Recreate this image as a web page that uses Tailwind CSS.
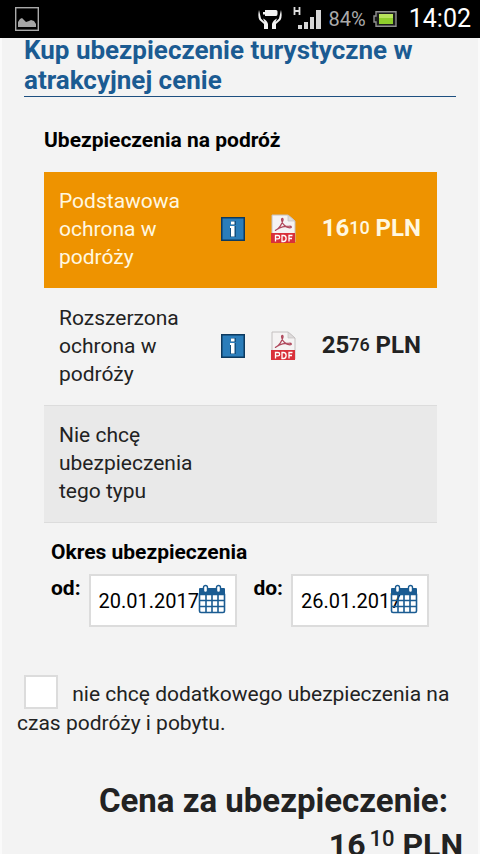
<!DOCTYPE html>
<html lang="pl">
<head>
<meta charset="utf-8">
<meta name="viewport" content="width=device-width, initial-scale=1">
<title>Ubezpieczenie turystyczne</title>
<script src="https://cdn.jsdelivr.net/npm/@tailwindcss/browser@4"></script>
</head>
<body class="h-screen overflow-hidden bg-[#fafafa] font-[Roboto,'Liberation_Sans',sans-serif] text-[21px] leading-[28px] text-[#222]">
<svg class="hidden" aria-hidden="true">
  <symbol id="info" viewBox="0 0 24 24">
    <rect width="24" height="24" fill="#0d3a5f"/><rect x="1.5" y="1.5" width="21" height="21" fill="#2b7dba"/>
    <path d="M10 4h5v4h-5zM9 9h6v11H9z" fill="#14507f"/>
    <path d="M10 4.500h3.500v3H10zM9 9h4.500v10.500H10V11H9z" fill="#fff"/>
  </symbol>
  <symbol id="pdf" viewBox="0 0 26 30">
    <path d="M2 1h16l7 6v21H2z" fill="#f5f3f3" stroke="#c4c0c0"/>
    <path d="M18 1v6h7z" fill="#dedbdb" stroke="#c4c0c0" stroke-width=".7"/>
    <path d="M6 16c3-1 6-6 7-10 .3-2-1.600-2-1.400 0 .4 4 4 7.500 8.400 7.800 2 0 1.600-1.700-.5-1.600-4 0-9.500 1.300-12.700 3.300-1.300.9-1.900 1.200-.8.500z" fill="none" stroke="#b0485c" stroke-width="1.300"/>
    <rect x="1" y="19" width="24" height="10" fill="#d9303a"/>
    <path d="M5.500 27.500v-6H8c2.200 0 2.200 3.300 0 3.300H5.500M12 21.500v6h1.500c3.500 0 3.500-6 0-6zM19 27.500v-6h3.500M19 24.500h3" fill="none" stroke="#fff" stroke-width="1.300"/>
  </symbol>
  <symbol id="calendar" viewBox="0 0 28 30">
    <path d="M1 5q0-1 1-1h24q1 0 1 1v6H1z" fill="#1b5c92"/>
    <path d="M1.500 10.500h25V27q0 1.500-1.500 1.500H3Q1.500 28.500 1.500 27zM2 16.500h24M2 22.500h24M8 11v17M14 11v17M20 11v17" fill="none" stroke="#1b5c92" stroke-width="1.600"/>
    <rect x="5.500" y="1.500" width="4" height="7" rx="2" fill="#fff" stroke="#1b5c92" stroke-width="1.400"/>
    <rect x="18.500" y="1.500" width="4" height="7" rx="2" fill="#fff" stroke="#1b5c92" stroke-width="1.400"/>
  </symbol>
</svg>

<header class="relative z-10 flex h-[38px] items-center bg-black pr-[9px] pl-[15px] text-white">
  <svg class="mr-auto h-6 w-6" viewBox="0 0 24 24" role="img" aria-label="Obraz"><rect x=".7" y=".7" width="22.600" height="22.600" fill="none" stroke="#aaa" stroke-width="1.400"/><path d="M3 20v-5l2-3 2-1 2 2 2 2 3-1 2-1 3 1 2 3v3z" fill="#a5a5a5"/></svg>
  <svg class="mr-[11px] h-5 w-6" viewBox="0 0 24 20" role="img" aria-label="Oszczędzanie energii"><path d="M1 1Q-.5 8 1.500 11L6 15v5h4v-5Q9 11 5 9.500L6.500 13 3 9.500zM23 1q1.500 7-.5 10L18 15v5h-4v-5q1-4 5-5.500L17.500 13 21 9.500z" fill="#f2f2f2"/><path d="M5 3h2V1h11q1.500 0 1.500 1.500V5Q19.500 7 18 7H7V5.500H5z" fill="#f2f2f2"/></svg>
  <svg class="mr-2 h-6 w-[28px]" viewBox="0 0 28 24" role="img" aria-label="Zasięg H"><path d="M1.500 0v8M6.500 0v8M1.500 4h5" stroke="#ddd" stroke-width="1.800" fill="none"/><path d="M5 18h4v4H5zM11 15h4v7h-4zM17 10h4v12h-4zM23 3h5v19h-5z" fill="#d5d5d5"/></svg>
  <span class="mr-[7px] text-[20px] text-[#aaa]">84%</span>
  <svg class="mr-[12px] h-4 w-6" viewBox="0 0 24 16" role="img" aria-label="Bateria"><path d="M3 .7h20v14.600H3V11H1V5h2z" fill="#1c1c1c" stroke="#909090" stroke-width="1.400"/><rect x="6" y="3" width="14" height="10" fill="#8fce2c"/><rect x="6" y="3" width="14" height="4" fill="#b8e35c"/></svg>
  <span class="text-[25px]">14:02</span>
</header>

<main class="mx-[2px] -mt-[3px] bg-[#f3f3f3] pb-8">
  <h1 class="mx-[22px] border-b border-[#1d4f80] pb-px text-[26px] leading-[30px] font-bold text-[#1b5b92]">Kup ubezpieczenie turystyczne w atrakcyjnej cenie</h1>

  <section class="mr-[41px] ml-[42px] pt-[29px]">
    <h2 class="font-bold text-black">Ubezpieczenia na podróż</h2>
    <table class="mt-[18px] w-full border-collapse">
      <tbody>
        <tr class="bg-[#ee9300] text-[#fff8e0]">
          <th scope="row" class="w-[165px] pt-[15px] pr-3 pb-[17px] pl-[15px] text-left font-normal">Podstawowa ochrona w podróży</th>
          <td class="w-12 pb-[2px]"><button type="button" class="mx-auto block" aria-label="Informacje"><svg class="size-6"><use href="#info"/></svg></button></td>
          <td class="w-[52px] pb-[2px]"><a href="#" class="block" aria-label="Warunki PDF"><svg class="mx-auto h-[30px] w-[26px]"><use href="#pdf"/></svg></a></td>
          <td class="pr-4 pb-1 text-right text-[24px] font-bold whitespace-nowrap">16<span class="align-[2px] text-[18px] leading-none font-medium">10</span> PLN</td>
        </tr>
        <tr>
          <th scope="row" class="pt-4 pr-3 pb-[17px] pl-[15px] text-left font-normal">Rozszerzona ochrona w podróży</th>
          <td class="pb-[2px]"><button type="button" class="mx-auto block" aria-label="Informacje"><svg class="size-6"><use href="#info"/></svg></button></td>
          <td class="pb-[2px]"><a href="#" class="block" aria-label="Warunki PDF"><svg class="mx-auto h-[30px] w-[26px]"><use href="#pdf"/></svg></a></td>
          <td class="pr-4 pb-1 text-right text-[24px] font-bold whitespace-nowrap">25<span class="align-[2px] text-[18px] leading-none font-medium">76</span> PLN</td>
        </tr>
        <tr class="border-y border-[#dcdcdc] bg-[#e9e9e9]">
          <th scope="row" class="pt-[15px] pr-3 pb-[17px] pl-[15px] text-left font-normal">Nie chcę ubezpieczenia tego typu</th>
          <td colspan="3"></td>
        </tr>
      </tbody>
    </table>
  </section>

  <fieldset class="mr-[49px] ml-[49px] pt-[15px] text-black">
    <legend class="contents font-bold">Okres ubezpieczenia</legend>
    <div class="mt-[8px] flex items-start">
      <label for="from" class="mr-2 font-bold">od:</label>
      <div class="relative w-[148px]">
        <input id="from" type="text" value="20.01.2017" class="block h-[53px] w-full border-2 border-[#dcdcdc] bg-white pl-2 text-[20px]">
        <button type="button" class="absolute top-[10px] right-[11px]" aria-label="Wybierz datę od"><svg class="h-[30px] w-7"><use href="#calendar"/></svg></button>
      </div>
      <label for="to" class="mr-2 ml-auto font-bold">do:</label>
      <div class="relative w-[138px]">
        <input id="to" type="text" value="26.01.2017" class="block h-[53px] w-full border-2 border-[#dcdcdc] bg-white pl-2 text-[20px]">
        <button type="button" class="absolute top-[10px] right-[11px]" aria-label="Wybierz datę do"><svg class="h-[30px] w-7"><use href="#calendar"/></svg></button>
      </div>
    </div>
  </fieldset>

  <p class="mt-[48px] px-[15px]">
    <input id="none" type="checkbox" class="mr-[9px] ml-[7px] inline-block size-[34px] appearance-none border-2 border-[#dcdcdc] bg-white align-[-8px]">
    <label for="none">nie chcę dodatkowego ubezpieczenia na czas podróży i pobytu.</label>
  </p>

  <div class="mt-[42px] pr-[15px] text-right text-[32px] leading-[44px] font-bold">
    <p class="pr-[15px] text-[33px]">Cena za ubezpieczenie:</p>
    <p>16<span class="ml-1 align-[10px] text-[22px] leading-none font-medium">10</span> PLN</p>
  </div>
</main>
</body>
</html>
